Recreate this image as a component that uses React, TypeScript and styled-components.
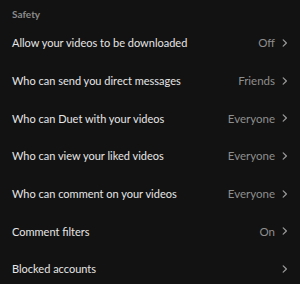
import React from 'react';
import styled, { createGlobalStyle } from 'styled-components';

const GlobalStyle = createGlobalStyle`
    html, body {
        margin: 0;
        padding: 0;
        background-color: #121212;
    }
`;

const Container = styled.div`
    width: 300px;
    height: 284px;
    background-color: #121212;
    font-family: Lato, "Liberation Sans", sans-serif;
    overflow: hidden;
`;

const Header = styled.div`
    padding: 7px 12px 0;
    height: 17px;
    font-size: 10px;
    font-weight: 700;
    color: #8b8b8b;
    line-height: 14px;
`;

const Row = styled.div`
    display: flex;
    align-items: center;
    height: 37.7px;
    padding: 0 12px;
`;

const Label = styled.span`
    flex: 1;
    font-size: 11px;
    color: #e6e6e6;
`;

const Value = styled.span`
    font-size: 11.5px;
    color: #8e8e8e;
    margin-right: 7px;
`;

const Chevron = () => (
    <svg width="6" height="8" viewBox="0 0 6 8" fill="none">
        <path d="M1.2 0.8L4.4 4L1.2 7.2" stroke="#9a9a9a" strokeWidth="1.2" strokeLinecap="round" strokeLinejoin="round" />
    </svg>
);

const rows = [
    { label: 'Allow your videos to be downloaded', value: 'Off' },
    { label: 'Who can send you direct messages', value: 'Friends' },
    { label: 'Who can Duet with your videos', value: 'Everyone' },
    { label: 'Who can view your liked videos', value: 'Everyone' },
    { label: 'Who can comment on your videos', value: 'Everyone' },
    { label: 'Comment filters', value: 'On' },
    { label: 'Blocked accounts', value: '' },
];

const App: React.FC = () => {
    return (
        <Container>
            <GlobalStyle />
            <Header>Safety</Header>
            {rows.map((r) => (
                <Row key={r.label}>
                    <Label>{r.label}</Label>
                    {r.value && <Value>{r.value}</Value>}
                    <Chevron />
                </Row>
            ))}
        </Container>
    );
};

export default App;
